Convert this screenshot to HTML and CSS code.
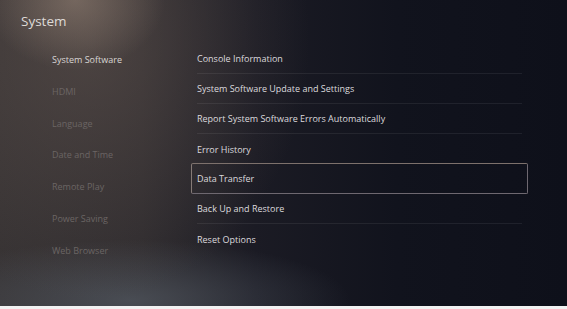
FILE: index.html
```html
<!DOCTYPE html>
<html lang="en">
<head>
    <meta charset="UTF-8">
    <meta name="viewport" content="width=device-width, initial-scale=1.0">
    <title>System</title>
    <link rel="stylesheet" href="styles.css">
</head>
<body>
    <div id="screen">
        <h1 class="title">System</h1>
        <div class="layout">
            <ul class="nav">
                <li class="on">System Software</li>
                <li>HDMI</li>
                <li>Language</li>
                <li>Date and Time</li>
                <li>Remote Play</li>
                <li>Power Saving</li>
                <li>Web Browser</li>
            </ul>
            <ul class="list">
                <li>Console Information</li>
                <li>System Software Update and Settings</li>
                <li>Report System Software Errors Automatically</li>
                <li class="pre">Error History</li>
                <li class="focus">Data Transfer</li>
                <li>Back Up and Restore</li>
                <li class="last">Reset Options</li>
            </ul>
        </div>
    </div>
</body>
</html>
```

FILE: styles.css
```css
*{
    margin: 0;
    padding: 0;
    box-sizing: border-box;
}
body{
    background: #f2f2f2;
    font-family: "Open Sans", "Noto Sans", sans-serif;
}
#screen{
    width: 567px;
    height: 306px;
    overflow: hidden;
    background:
        radial-gradient(ellipse 90px 70px at 75px 0px, rgba(160,140,125,.5), rgba(160,140,125,0)),
        radial-gradient(ellipse 220px 260px at 90px 40px, rgba(110,95,88,.45), rgba(110,95,88,0)),
        radial-gradient(ellipse 220px 60px at 130px 300px, rgba(90,98,108,.6), rgba(90,98,108,0)),
        linear-gradient(90deg, #363233 0%, #2e2b2e 25%, #1b1b24 45%, #11131d 70%, #0e101a 100%);
}
.title{
    padding: 12px 0 0 21px;
    height: 44px;
    font-size: 13.5px;
    font-weight: 400;
    color: #dedad7;
}
.layout{
    display: grid;
    grid-template-columns: 191px 337px;
}
.nav{
    list-style: none;
    padding-left: 52px;
}
.nav li{
    height: 31.8px;
    line-height: 31.8px;
    font-size: 9px;
    color: #6b6564;
}
.nav li.on{
    color: #d9d6d4;
}
.list{
    list-style: none;
}
.list li{
    display: flex;
    align-items: center;
    height: 30px;
    margin: 0 6px;
    border-bottom: 1px solid rgba(255,255,255,.07);
    font-size: 9px;
    color: #dcdade;
}
.list li.pre,
.list li.last{
    border-bottom: none;
}
.list li.focus{
    height: 31px;
    margin: -1px 0 0;
    padding-left: 5px;
    border: 1px solid #6e6870;
    border-left-color: #857a76;
    border-top-color: #7d716c;
    border-radius: 2px;
}
```
